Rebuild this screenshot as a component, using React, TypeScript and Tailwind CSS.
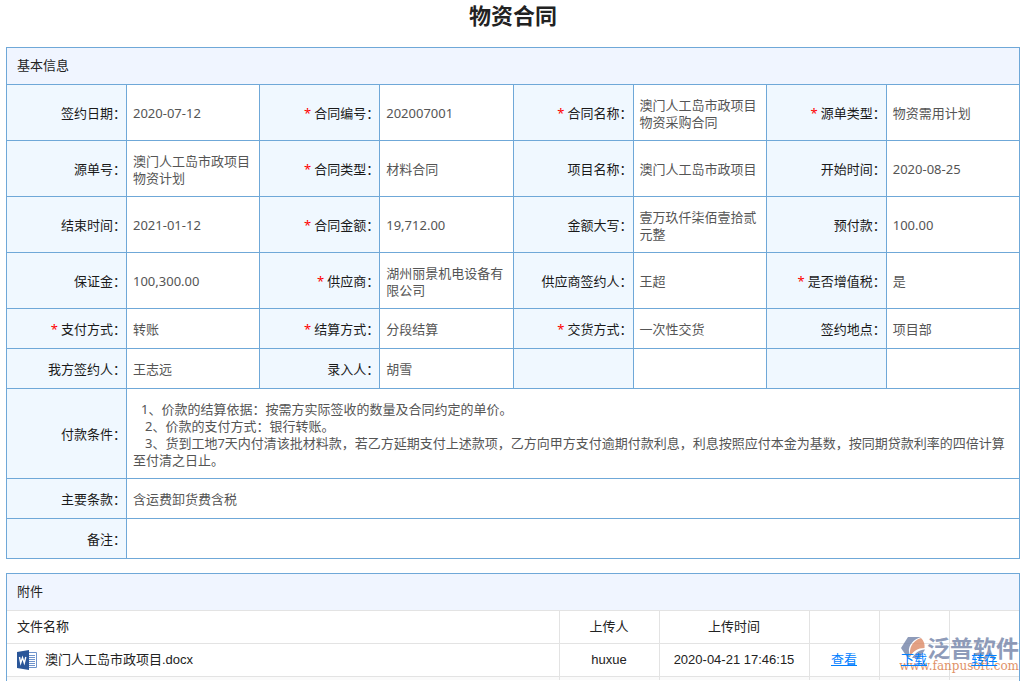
import React from "react";

type Field = { label: string; value: string; required?: boolean };

const rows: (Field | null)[][] = [
  [
    { label: "签约日期", value: "2020-07-12" },
    { label: "合同编号", value: "202007001", required: true },
    { label: "合同名称", value: "澳门人工岛市政项目物资采购合同", required: true },
    { label: "源单类型", value: "物资需用计划", required: true },
  ],
  [
    { label: "源单号", value: "澳门人工岛市政项目物资计划" },
    { label: "合同类型", value: "材料合同", required: true },
    { label: "项目名称", value: "澳门人工岛市政项目" },
    { label: "开始时间", value: "2020-08-25" },
  ],
  [
    { label: "结束时间", value: "2021-01-12" },
    { label: "合同金额", value: "19,712.00", required: true },
    { label: "金额大写", value: "壹万玖仟柒佰壹拾贰元整" },
    { label: "预付款", value: "100.00" },
  ],
  [
    { label: "保证金", value: "100,300.00" },
    { label: "供应商", value: "湖州丽景机电设备有限公司", required: true },
    { label: "供应商签约人", value: "王超" },
    { label: "是否增值税", value: "是", required: true },
  ],
  [
    { label: "支付方式", value: "转账", required: true },
    { label: "结算方式", value: "分段结算", required: true },
    { label: "交货方式", value: "一次性交货", required: true },
    { label: "签约地点", value: "项目部" },
  ],
  [
    { label: "我方签约人", value: "王志远" },
    { label: "录入人", value: "胡雪" },
    null,
    null,
  ],
];

function LabelCell({ label, required }: { label?: string; required?: boolean }) {
  return (
    <th
      scope="row"
      className="border border-[#6fa8d8] bg-[#f0f8ff] pt-0.5 text-right align-middle font-normal text-[#1a1a1a]"
    >
      {required && <span className="mr-[3px] text-[#ff0000]">*</span>}
      {label && <span>{label}：</span>}
    </th>
  );
}

function ValueCell({ value, colSpan }: { value?: React.ReactNode; colSpan?: number }) {
  return (
    <td colSpan={colSpan} className="border border-[#6fa8d8] px-1.5 pt-0.5 align-middle text-[#555]">
      {value}
    </td>
  );
}

function WordIcon() {
  return (
    <svg viewBox="0 0 20 20" className="size-5 shrink-0" aria-hidden="true">
      <path d="M11 2.5h8.500v15H11z" fill="#fff" stroke="#6f93cb" />
      <path d="M12 5.500h6M12 7.500h6M12 9.500h6M12 11.500h6M12 13.500h6M12 15.500h6" stroke="#6f93cb" />
      <path d="M0 2 12 0v20L0 18z" fill="#2a5699" />
      <path d="m2.500 7 1.200 6 1.800-5.400L7.300 13l1.500-6" fill="none" stroke="#fff" strokeWidth="1.400" />
    </svg>
  );
}

function Watermark() {
  return (
    <div className="pointer-events-none absolute top-[62px] right-0 opacity-80" aria-hidden="true">
      <div className="flex items-center justify-end">
        <svg viewBox="0 0 26 24" className="h-6 w-[26px]">
          <path d="M7 1h13C13 3 7 9 8 16l1 5H6L0 12z" fill="#7383a8" />
          <path d="M9 21c-1-9 2-16 11-19 3 3 4 6 3.500 10C17 12 12 15 9 21z" fill="#dd8a66" />
          <path d="M24 13.500 19 22h-8c3-5 7-8 13-8.500z" fill="#7383a8" />
        </svg>
        <span className="text-[23px] leading-6 font-bold text-[#7383a8]">泛普软件</span>
      </div>
      <div className="text-right font-['DejaVu_Serif',serif] text-[12px] leading-[12px] text-[#d9773f]">
        www.fanpusoft.com
      </div>
    </div>
  );
}

const cell = "border border-[#e3e3e3] text-center font-normal";

export default function App() {
  return (
    <main className="flex min-h-screen flex-col overflow-hidden bg-white pr-[9px] pl-1.5 font-['Noto_Sans','Noto_Sans_CJK_SC',sans-serif] text-[13px] leading-[17px]">
      <h1 className="pb-[17px] text-center text-[22px] leading-[30px] font-bold text-[#222]">物资合同</h1>

      <table className="w-full table-fixed border-collapse">
        <colgroup>
          <col className="w-[120px]" />
          <col />
          <col className="w-[120px]" />
          <col />
          <col className="w-[120px]" />
          <col />
          <col className="w-[120px]" />
          <col />
        </colgroup>
        <thead>
          <tr className="h-[37px]">
            <th
              colSpan={8}
              className="border border-[#6fa8d8] bg-[#f0f5ff] px-2.5 pb-0.5 text-left font-normal text-[#222]"
            >
              基本信息
            </th>
          </tr>
        </thead>
        <tbody>
          {rows.map((row, r) => (
            <tr key={r} className={r < 4 ? "h-14" : "h-10"}>
              {row.map((field, c) => (
                <React.Fragment key={c}>
                  <LabelCell label={field?.label} required={field?.required} />
                  <ValueCell value={field?.value} />
                </React.Fragment>
              ))}
            </tr>
          ))}
          <tr className="h-[90px]">
            <LabelCell label="付款条件" />
            <ValueCell
              colSpan={7}
              value={
                <>
                  <p className="pl-2">1、价款的结算依据：按需方实际签收的数量及合同约定的单价。</p>
                  <p className="pl-3">2、价款的支付方式：银行转账。</p>
                  <p className="indent-3">
                    3、货到工地7天内付清该批材料款，若乙方延期支付上述款项，乙方向甲方支付逾期付款利息，利息按照应付本金为基数，按同期贷款利率的四倍计算至付清之日止。
                  </p>
                </>
              }
            />
          </tr>
          <tr className="h-10">
            <LabelCell label="主要条款" />
            <ValueCell colSpan={7} value="含运费卸货费含税" />
          </tr>
          <tr className="h-10">
            <LabelCell label="备注" />
            <ValueCell colSpan={7} />
          </tr>
        </tbody>
      </table>

      <section className="relative mt-3.5 flex-1 border border-b-0 border-[#6fa8d8] bg-white">
        <h2 className="border-b border-[#e3e3e3] bg-[#f0f5ff] px-2.5 pt-2 pb-2.5 leading-[18px] text-[#222]">附件</h2>
        <Watermark />
        <table className="w-full table-fixed border-collapse border-hidden font-['Liberation_Sans','Noto_Sans_CJK_SC',sans-serif] text-[#222]">
          <colgroup>
            <col />
            <col className="w-[100px]" />
            <col className="w-[150px]" />
            <col className="w-[70px]" />
            <col className="w-[70px]" />
            <col className="w-[70px]" />
          </colgroup>
          <thead>
            <tr className="h-8">
              <th className="border border-[#e3e3e3] px-2.5 text-left font-normal">文件名称</th>
              <th className={cell}>上传人</th>
              <th className={cell}>上传时间</th>
              <td className={cell} />
              <td className={cell} />
              <td className={cell} />
            </tr>
          </thead>
          <tbody>
            <tr className="h-[33px]">
              <td className="border border-[#e3e3e3] px-2.5">
                <div className="flex items-center gap-2">
                  <WordIcon />
                  <span>澳门人工岛市政项目.docx</span>
                </div>
              </td>
              <td className={cell}>huxue</td>
              <td className={cell}>2020-04-21 17:46:15</td>
              {["查看", "下载", "转存"].map((action) => (
                <td key={action} className={cell}>
                  <a href="#" className="relative z-10 text-[#0080ff] underline">
                    {action}
                  </a>
                </td>
              ))}
            </tr>
            <tr className="h-1 bg-[#fafafa]">
              <td className={cell} />
              <td className={cell} />
              <td className={cell} />
              <td className={cell} />
              <td className={cell} />
              <td className={cell} />
            </tr>
          </tbody>
        </table>
      </section>
    </main>
  );
}
